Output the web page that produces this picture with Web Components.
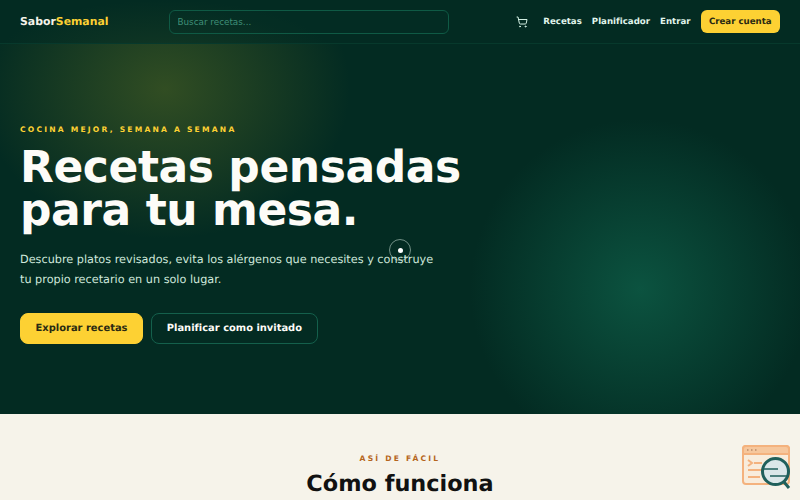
<!DOCTYPE html>
<html lang="es"><head><meta charset="utf-8"><title>SaborSemanal</title>
<style>
html,body{margin:0;padding:0;height:500px;overflow:hidden;background:#f6f3ea;font-family:"DejaVu Sans",sans-serif;text-rendering:geometricPrecision}
</style></head><body>
<sabor-nav></sabor-nav>
<sabor-hero></sabor-hero>
<sabor-how></sabor-how>
<sabor-widget></sabor-widget>
<script>
class Base extends HTMLElement{
  constructor(){super();this.attachShadow({mode:'open'}).innerHTML=this.constructor.html;}
}
class SaborNav extends Base{static html=`<style>
:host{display:flex;align-items:center;height:43px;padding:0 20px;background:radial-gradient(ellipse 170px 60px at 165px 60px,rgba(60,90,40,.28) 0,rgba(60,90,40,0) 100%),#032b22;border-bottom:1px solid #07392c;font-family:"DejaVu Sans",sans-serif;position:relative;z-index:2}
.logo{font-size:10.88px;font-weight:700;color:#f6f3ea;width:149px;white-space:nowrap}
.logo b{color:#fdd133;font-weight:700}
input{box-sizing:border-box;width:280px;height:24px;border:1px solid #0f5a45;border-radius:6px;background:#04312640;padding:0 7.500px;font:8.8px "DejaVu Sans",sans-serif;color:#fff;outline:none}
input::placeholder{color:#3f8f78;opacity:1}
.right{margin-left:auto;display:flex;align-items:center;gap:10px}
svg{display:block;margin-right:5.500px}
a{font-size:8.64px;font-weight:700;color:#e0f5ec;white-space:nowrap;position:relative;top:.5px}
.cta{background:#fdd133;color:#2a2a12;padding:0 8.400px;height:23px;line-height:24px;border-radius:6px;top:0}
</style>
<div class="logo">Sabor<b>Semanal</b></div>
<input placeholder="Buscar recetas...">
<div class="right">
<svg width="12" height="12" viewBox="0 0 24 24" fill="none" stroke="#d6f3e6" stroke-width="2" stroke-linecap="round" stroke-linejoin="round"><circle cx="8" cy="21" r="1"/><circle cx="19" cy="21" r="1"/><path d="M2.05 2.05h2l2.66 12.42a2 2 0 0 0 2 1.58h9.78a2 2 0 0 0 1.95-1.57l1.65-7.43H5.12"/></svg>
<a>Recetas</a><a>Planificador</a><a>Entrar</a><a class="cta">Crear cuenta</a>
</div>`}
class SaborHero extends Base{static html=`<style>
:host{display:block;height:370px;box-sizing:border-box;padding:81px 20px 0;position:relative;overflow:hidden;font-family:"DejaVu Sans",sans-serif;
background:radial-gradient(circle 170px at 640px 245px,rgba(13,90,69,.85) 0,rgba(13,90,69,0) 100%),radial-gradient(ellipse 185px 150px at 165px 45px,rgba(80,100,35,.6) 0,rgba(80,100,35,0) 100%),#032b22}
.eyebrow{font-size:7.6px;font-weight:700;letter-spacing:2.2px;color:#fdd133;line-height:10px}
h1{margin:11px 0 0;font-size:44px;line-height:43.2px;font-weight:700;color:#fdfcf8;letter-spacing:-.44px}
p{margin:17.4px 0 0;font-size:11.26px;line-height:20.6px;color:#cfe8dc;width:420px}
.btns{display:flex;gap:7.500px;margin-top:22.200px}
.b{font-size:9.92px;font-weight:700;height:31px;line-height:29px;box-sizing:border-box;padding:0 14.6px;border-radius:8px;border:1px solid #fdd133;background:#fdd133;color:#2a2a12}
.g{background:transparent;border-color:#14604c;color:#fdfcf8;padding:0 15.2px}
.ring{position:absolute;left:389px;top:195px;width:22px;height:22px;box-sizing:border-box;border:1px solid rgba(220,240,230,.5);border-radius:50%;display:flex;align-items:center;justify-content:center}
.ring i{width:5px;height:5px;border-radius:50%;background:#fff}
</style>
<div class="eyebrow">COCINA MEJOR, SEMANA A SEMANA</div>
<h1>Recetas pensadas<br>para tu mesa.</h1>
<p>Descubre platos revisados, evita los alérgenos que necesites y construye tu propio recetario en un solo lugar.</p>
<div class="btns"><a class="b">Explorar recetas</a><a class="b g">Planificar como invitado</a></div>
<div class="ring"><i></i></div>`}
class SaborHow extends Base{static html=`<style>
:host{display:block;text-align:center;padding-top:40px;background:#f6f3ea;font-family:"DejaVu Sans",sans-serif}
.e{font-size:7.6px;font-weight:700;letter-spacing:2.2px;color:#b5651d;line-height:10px}
h2{margin:6px 0 0;font-size:22.4px;line-height:28px;font-weight:700;color:#111}
</style><div class="e">ASÍ DE FÁCIL</div><h2>Cómo funciona</h2>`}
class SaborWidget extends Base{static html=`<style>
:host{position:fixed;left:742px;top:445px;width:50px;height:44px;display:block}
svg{display:block}
</style>
<svg width="50" height="44" viewBox="0 0 50 44" fill="none">
<rect x="1" y="1" width="46" height="38" rx="3" fill="#f8ecdc" stroke="#f4b27e" stroke-width="2"/>
<path d="M1 4a3 3 0 0 1 3-3h40a3 3 0 0 1 3 3v5H1z" fill="#f6c79d" stroke="#f4b27e" stroke-width="2"/>
<path d="M5 5h1.500M9 5h1.500M13 5h1.500" stroke="#b98a68" stroke-width="1.500"/>
<path d="M6 15l4 3-4 3M12 18h8M6 25h14M6 32h12" stroke="#f4b27e" stroke-width="2"/>
<path d="M42 37l5 6" stroke="#1f5f5b" stroke-width="3"/>
<circle cx="33.500" cy="26.500" r="13" fill="#dbe7e9" stroke="#1f5f5b" stroke-width="3"/>
<path d="M22 24h14M28 31h18" stroke="#1f5f5b" stroke-width="1.500"/>
</svg>`}
customElements.define('sabor-nav',SaborNav);
customElements.define('sabor-hero',SaborHero);
customElements.define('sabor-how',SaborHow);
customElements.define('sabor-widget',SaborWidget);
</script>
</body></html>
